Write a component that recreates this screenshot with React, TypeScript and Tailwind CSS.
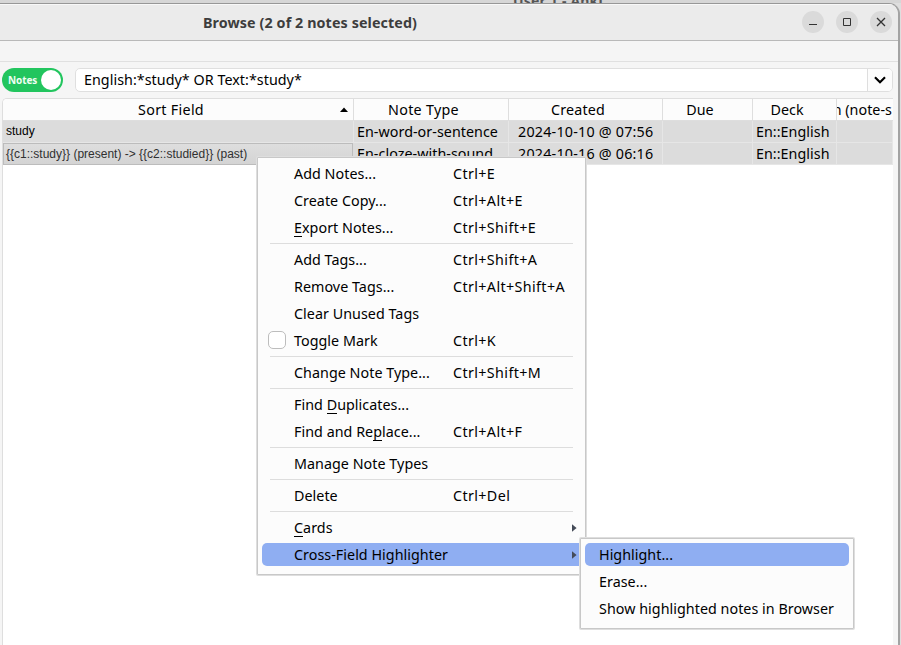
import React from "react";

type Entry = {
  label: string;
  keys?: string;
  hot?: number;
  check?: boolean;
  sub?: boolean;
  active?: boolean;
};

const groups: Entry[][] = [
  [
    { label: "Add Notes...", keys: "Ctrl+E" },
    { label: "Create Copy...", keys: "Ctrl+Alt+E" },
    { label: "Export Notes...", keys: "Ctrl+Shift+E", hot: 0 },
  ],
  [
    { label: "Add Tags...", keys: "Ctrl+Shift+A" },
    { label: "Remove Tags...", keys: "Ctrl+Alt+Shift+A" },
    { label: "Clear Unused Tags" },
    { label: "Toggle Mark", keys: "Ctrl+K", check: true },
  ],
  [{ label: "Change Note Type...", keys: "Ctrl+Shift+M" }],
  [
    { label: "Find Duplicates...", hot: 5 },
    { label: "Find and Replace...", keys: "Ctrl+Alt+F", hot: 11 },
  ],
  [{ label: "Manage Note Types" }],
  [{ label: "Delete", keys: "Ctrl+Del" }],
  [
    { label: "Cards", hot: 0, sub: true },
    { label: "Cross-Field Highlighter", sub: true, active: true },
  ],
];

function Label({ text, hot }: { text: string; hot?: number }) {
  if (hot === undefined) return <>{text}</>;
  return (
    <>
      {text.slice(0, hot)}
      <span className="inline-block h-[18px] border-b border-black leading-[18px]">{text[hot]}</span>
      {text.slice(hot + 1)}
    </>
  );
}

function MenuItem({ item }: { item: Entry }) {
  return (
    <div className="h-[27px] py-[2px] pl-[4px]">
      <div
        className={
          "flex h-[23px] items-center rounded-[5px] pl-[6px] " + (item.active ? "bg-[#8faef2]" : "")
        }
      >
        <div className="w-[26px] shrink-0">
          {item.check && <div className="mb-px h-[18px] w-[18px] rounded-[5px] border border-[#bdbdbd] bg-white" />}
        </div>
        <div className="w-[159px] shrink-0 whitespace-nowrap">
          <Label text={item.label} hot={item.hot} />
        </div>
        <div className="grow whitespace-nowrap tracking-[0.38px]">{item.keys}</div>
        {item.sub && (
          <svg className="mr-[8px] h-[8px] w-[5px]" viewBox="0 0 5 8">
            <path d="M0 0.3 L4.6 4 L0 7.7Z" fill="#454b58" />
          </svg>
        )}
      </div>
    </div>
  );
}

const cols = "grid grid-cols-[351px_155px_154px_90px_84px_56px]";

function Header({ children, className = "" }: { children: React.ReactNode; className?: string }) {
  return (
    <div className={"flex items-center justify-center overflow-hidden whitespace-nowrap border-r border-[#dedede] " + className}>
      {children}
    </div>
  );
}

function Cell({ children, className = "" }: { children?: React.ReactNode; className?: string }) {
  return (
    <div className={"flex items-center overflow-hidden whitespace-nowrap border-r border-b border-[#e6e6e6] " + className}>
      {children}
    </div>
  );
}

export default function App() {
  return (
    <div className="relative h-[645px] w-[901px] overflow-hidden bg-[#dedede] font-['Noto_Sans',sans-serif] text-[14.3px] leading-[20px] tracking-[0.04px] text-black">
      <div className="h-[3px] overflow-hidden bg-[#d6d6d6] pl-[513px]">
        <div className="-mt-[9px] text-[14px] font-bold leading-[20px] tracking-[0.2px] text-[#555]">User 1 - Anki</div>
      </div>
      <div className="flex h-[642px] w-[900px] flex-col overflow-hidden rounded-tr-[11px] border-t border-r-2 border-t-[#979797] border-r-[#a3a3a3] bg-[#f5f5f5]">
        <div className="flex h-[37px] shrink-0 items-center border-b border-[#b9b9b9] bg-[#ebebeb] shadow-[inset_0_1px_0_#f8f8f8]">
          <div className="w-[620px] pt-[2px] text-center font-bold tracking-[0.1px] text-[#3d3d3d]">Browse (2 of 2 notes selected)</div>
          <div className="ml-auto mr-[6px] flex gap-[12px]">
            <div className="h-[22px] w-[22px] rounded-full bg-[#dadada]">
              <svg viewBox="0 0 22 22"><path d="M7 13.5h8" stroke="#333" fill="none" /></svg>
            </div>
            <div className="h-[22px] w-[22px] rounded-full bg-[#dadada]">
              <svg viewBox="0 0 22 22"><path d="M7.5 7.5h7v7h-7z" stroke="#333" fill="none" /></svg>
            </div>
            <div className="h-[22px] w-[22px] rounded-full bg-[#dadada]">
              <svg viewBox="0 0 22 22"><path d="M7 7l8 8M15 7l-8 8" stroke="#333" strokeWidth="1.3" fill="none" /></svg>
            </div>
          </div>
        </div>
        <div className="h-[21px] shrink-0 border-b border-[#e0e0e0]" />
        <div className="mt-[6px] flex h-[24px] shrink-0">
          <div className="ml-[2px] flex h-[24px] w-[61px] items-center justify-between rounded-full bg-[#22c55e] pr-[2px] pl-[6px]">
            <span className="text-[10px] font-bold tracking-[-0.1px] text-[#f0fdf4]">Notes</span>
            <span className="h-[20px] w-[20px] rounded-full bg-white" />
          </div>
          <div className="ml-[12px] flex h-[24px] w-[818px] overflow-hidden rounded-[5px] border border-[#dfdfdf] bg-white">
            <div className="flex grow items-center pl-[8px]">English:*study* OR Text:*study*</div>
            <div className="flex w-[25px] items-center justify-center border-l border-[#dedede] bg-[#fcfcfc]">
              <svg className="h-[8px] w-[12px]" viewBox="0 0 12 8">
                <path d="M1 1.2l5 5 5-5" stroke="#000" strokeWidth="2.2" fill="none" />
              </svg>
            </div>
          </div>
        </div>
        <div className="mt-[6px] ml-[2px] w-[891px] grow overflow-hidden rounded-tl-[5px] border-t border-l border-[#dedede] bg-white">
          <div className={cols + " h-[22px] border-b border-[#dedede] bg-[#fcfcfc]"}>
            <Header>
              <span className="grow pr-px text-center tracking-[0.3px]">Sort Field</span>
              <svg className="mr-[5px] h-[5px] w-[8px]" viewBox="0 0 8 5"><path d="M0 5L4 0.5L8 5Z" /></svg>
            </Header>
            <Header className="pr-[15px] tracking-[0.3px]">Note Type</Header>
            <Header className="pr-[15px] tracking-[0.2px]">Created</Header>
            <Header className="pr-[15px]">Due</Header>
            <Header className="pr-[15px]">Deck</Header>
            <Header className="justify-end border-r-0 pr-px">n (note-s</Header>
          </div>
          <div className={cols + " h-[22px] bg-[#dcdcdc]"}>
            <Cell className="pl-[3px] pb-[2px] font-['Liberation_Sans',sans-serif] text-[12px] tracking-normal">study</Cell>
            <Cell className="pl-[3px]">En-word-or-sentence</Cell>
            <Cell className="pl-[9px] tracking-[0.22px]">2024-10-10 @ 07:56</Cell>
            <Cell />
            <Cell className="pl-[3px]">En::English</Cell>
            <Cell />
          </div>
          <div className={cols + " h-[22px] bg-[#dcdcdc]"}>
            <div className="mr-px flex items-center overflow-hidden border border-[#bcbcbc] bg-linear-to-b from-[#dedede] to-[#d4d4d4] pl-[2px] pb-px font-['Liberation_Sans',sans-serif] text-[12px] tracking-normal whitespace-nowrap text-[#303030]">
              {"{{c1::study}} (present) -> {{c2::studied}} (past)"}
            </div>
            <Cell className="pl-[3px]">En-cloze-with-sound</Cell>
            <Cell className="pl-[9px] tracking-[0.22px]">2024-10-16 @ 06:16</Cell>
            <Cell />
            <Cell className="pl-[3px]">En::English</Cell>
            <Cell />
          </div>
        </div>
      </div>

      <div className="absolute top-[157px] left-[257px] h-[418px] w-[329px] rounded-[1px] border border-[#c8c8c8] bg-[#fcfcfc] pt-[2px] shadow-[0_0_0_1px_#dedede]">
        {groups.map((group, i) => (
          <React.Fragment key={i}>
            {i > 0 && <div className="mx-[12px] h-[5px] pt-[2px]"><div className="h-px bg-[#dddddd]" /></div>}
            {group.map((item) => <MenuItem key={item.label} item={item} />)}
          </React.Fragment>
        ))}
      </div>

      <div className="absolute top-[538px] left-[580px] h-[91px] w-[274px] rounded-[1px] border border-[#c8c8c8] bg-[#fcfcfc] px-[4px] pt-[4px] shadow-[0_0_0_1px_#dedede]">
        <div className="flex h-[23px] items-center rounded-[5px] bg-[#8faef2] pl-[14px]">Highlight...</div>
        <div className="mt-[4px] flex h-[23px] items-center pl-[14px]">Erase...</div>
        <div className="mt-[4px] flex h-[23px] items-center pl-[14px] whitespace-nowrap">Show highlighted notes in Browser</div>
      </div>
    </div>
  );
}
